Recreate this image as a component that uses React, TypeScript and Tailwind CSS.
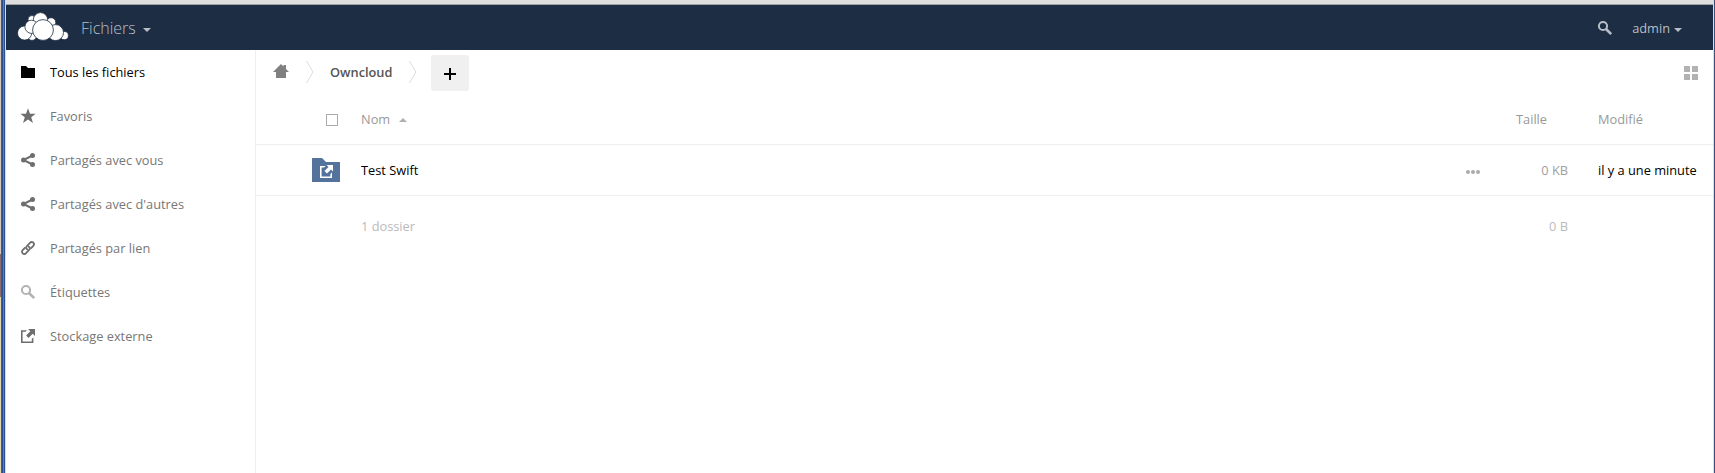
import React from 'react';

type IconProps = { className?: string };

const Logo = () => (
  <svg className="h-[30px] w-[52px]" viewBox="17 12 52 30" fill="#fff" stroke="#1d2d44" strokeWidth="0.8">
    <circle cx="32" cy="19.5" r="4" />
    <circle cx="51" cy="22.5" r="4.8" />
    <circle cx="40.5" cy="19.8" r="7.2" />
    <circle cx="32" cy="35.6" r="4.8" />
    <circle cx="24.6" cy="33" r="7.1" />
    <circle cx="31.5" cy="26.8" r="6.6" />
    <circle cx="64.3" cy="35.6" r="4.1" />
    <circle cx="55.5" cy="32.6" r="8" />
    <circle cx="43" cy="30" r="10.4" />
  </svg>
);

const Folder = ({ className }: IconProps) => (
  <svg className={className} viewBox="0 0 16 16" fill="#000">
    <path d="M1 2h5l2 2h7v10H1z" />
  </svg>
);

const Star = ({ className }: IconProps) => (
  <svg className={className} viewBox="0 0 16 16" fill="#6e6e6e">
    <path d="M8 .2 10 5.700h5.700l-4.500 3.500 1.800 5.800L8 11.600 3 15l1.800-5.800L.3 5.700H6z" />
  </svg>
);

const Share = ({ className }: IconProps) => (
  <svg className={className} viewBox="0 0 16 16" fill="#6e6e6e">
    <path d="M12.5 3.5 3.5 8l9 4.5" fill="none" stroke="#6e6e6e" strokeWidth="2" />
    <circle cx="12.5" cy="3.5" r="2.5" />
    <circle cx="3.5" cy="8" r="2.5" />
    <circle cx="12.5" cy="12.5" r="2.5" />
  </svg>
);

const LinkIcon = ({ className }: IconProps) => (
  <svg className={className} viewBox="0 0 16 16" fill="none" stroke="#6e6e6e" strokeWidth="1.8" strokeLinecap="round">
    <path d="M7.300 9.400C6 8.600 5.900 7.100 6.900 6l3-3.100c1-1 2.400-1.100 3.400-.2.9 1 .8 2.400-.2 3.400l-2 2.100" />
    <path d="M8.700 6.600c1.300.8 1.400 2.300.4 3.400l-3 3.100c-1 1-2.400 1.100-3.400.2-.9-1-.8-2.400.2-3.400l2-2.100" />
  </svg>
);

const Search = ({ className }: IconProps) => (
  <svg className={className} viewBox="0 0 16 16" fill="none" stroke="currentColor">
    <circle cx="6" cy="6" r="4.100" strokeWidth="2" />
    <path d="m9 9 5.200 5.200" strokeWidth="2.600" />
  </svg>
);

const External = ({ className }: IconProps) => (
  <svg className={className} viewBox="0 0 16 16" fill="currentColor">
    <path d="M7 2.200H1V15h12.400V9.500l-1.600 1.300v2.600H2.600V3.800h3z" />
    <path d="M8 1h7v7l-2.300-2.300-4.200 4.200-2.400-2.400 4.200-4.200z" />
  </svg>
);

const Home = () => (
  <svg className="h-4 w-4" viewBox="0 0 16 16" fill="#808080">
    <path d="m8 1-8 8h3v6h10V9h3l-3-3V2h-2.500v1.500z" />
  </svg>
);

const Chevron = () => (
  <svg className="h-[22px] w-2" viewBox="0 0 8 22" fill="none" stroke="#dcdcdc">
    <path d="M.5 0 7 11 .5 22" />
  </svg>
);

const Caret = ({ className }: IconProps) => (
  <svg className={className} viewBox="0 0 8 4" fill="currentColor">
    <path d="M0 0h8L4 4z" />
  </svg>
);

const StorageFolder = () => (
  <svg className="h-6 w-7" viewBox="0 0 28 24">
    <path d="M.5 0H10l4 4h13.500a.5.5 0 0 1 .5.500v19a.5.5 0 0 1-.5.500H.5a.5.5 0 0 1-.5-.5V.5A.5.5 0 0 1 .5 0z" fill="#54739c" />
    <g fill="#fff">
      <path d="M13.500 8H8v12h12v-5.500l-1.600 1.500v2.400H9.600V9.600H12z" />
      <path d="M14.500 7H21v6.500l-2-2-4 4-2.500-2.500 4-4z" />
    </g>
  </svg>
);

const navItems = [
  { label: 'Tous les fichiers', Icon: Folder, tone: 'text-black' },
  { label: 'Favoris', Icon: Star, tone: 'text-[#777]' },
  { label: 'Partagés avec vous', Icon: Share, tone: 'text-[#777]' },
  { label: "Partagés avec d'autres", Icon: Share, tone: 'text-[#777]' },
  { label: 'Partagés par lien', Icon: LinkIcon, tone: 'text-[#777]' },
  { label: 'Étiquettes', Icon: Search, tone: 'text-[#777]', iconTone: 'text-[#b2b2b2]' },
  { label: 'Stockage externe', Icon: External, tone: 'text-[#777]', iconTone: 'text-[#6e6e6e]' },
];

function Header() {
  return (
    <header className="flex h-[45px] shrink-0 items-center bg-[#1d2d44] pl-[11px] pr-[31px] text-[#b8bec6]">
      <div className="-mt-px flex items-center">
        <Logo />
      </div>
      <div className="ml-3 flex items-center">
        <span className="text-[16px] font-light leading-5">Fichiers</span>
        <Caret className="ml-[7px] mt-1 h-1 w-2" />
      </div>
      <Search className="ml-auto mt-px h-4 w-4" />
      <div className="ml-[19px] flex items-center">
        <span className="leading-5">admin</span>
        <Caret className="ml-1 mt-1 h-1 w-2" />
      </div>
    </header>
  );
}

function Sidebar() {
  return (
    <nav className="w-[250px] shrink-0 border-r border-[#eee]">
      {navItems.map(({ label, Icon, tone, iconTone }) => (
        <a key={label} className={`flex h-11 items-center pl-3.5 ${tone}`}>
          <span className={iconTone}>
            <Icon className="h-4 w-4" />
          </span>
          <span className="ml-3.5 whitespace-nowrap">{label}</span>
        </a>
      ))}
    </nav>
  );
}

function Files() {
  return (
    <main className="flex min-w-0 flex-1 flex-col">
      <div className="flex h-11 items-center pl-[17px] pr-[15px]">
        <div className="-mt-0.5">
          <Home />
        </div>
        <div className="ml-[17px]">
          <Chevron />
        </div>
        <span className="ml-4 w-[63px] font-semibold text-[#555]">Owncloud</span>
        <div className="ml-4">
          <Chevron />
        </div>
        <button className="ml-3.5 mt-0.5 flex h-9 w-[38px] items-center justify-center rounded-[3px] bg-[#f0f0f0] pt-0.5">
          <svg className="h-3 w-3" viewBox="0 0 12 12" fill="#000">
            <path d="M5 0h2v5h5v2H7v5H5V7H0V5h5z" />
          </svg>
        </button>
        <svg className="ml-auto mt-0.5 h-3.5 w-3.5" viewBox="0 0 14 14" fill="#b2b2b2">
          <path d="M0 0h6v6H0zM8 0h6v6H8zM0 8h6v6H0zM8 8h6v6H8z" />
        </svg>
      </div>
      <div className="flex h-[51px] items-center border-b border-[#eee] pl-[70px] text-[#999]">
        <span className="mt-px h-3 w-3 border border-[#aaa]" />
        <span className="ml-[23px]">Nom</span>
        <Caret className="ml-[9px] mt-px h-1 w-2 rotate-180 text-[#b0b0b0]" />
        <span className="ml-auto w-[82px]">Taille</span>
        <span className="w-[115px]">Modifié</span>
      </div>
      <div className="flex h-[51px] items-center border-b border-[#eee] pl-14">
        <StorageFolder />
        <span className="ml-[21px] text-black">Test Swift</span>
        <svg className="ml-auto mt-[3px] h-1 w-3.5" viewBox="0 0 14 4" fill="#aaa">
          <circle cx="2" cy="2" r="2" />
          <circle cx="7" cy="2" r="2" />
          <circle cx="12" cy="2" r="2" />
        </svg>
        <span className="w-[88px] text-right text-[#a0a0a0]">0 KB</span>
        <span className="ml-[30px] w-[115px] whitespace-nowrap text-black">il y a une minute</span>
      </div>
      <div className="flex h-[60px] items-center pl-[105px] pr-[145px] text-[#bababa]">
        <span>1 dossier</span>
        <span className="ml-auto">0 B</span>
      </div>
    </main>
  );
}

export default function App() {
  return (
    <div className="flex h-[473px] w-[1715px] overflow-hidden bg-white font-['Open_Sans',sans-serif] text-[12.8px] leading-5">
      <div className="flex w-px shrink-0 flex-col bg-[#d5c9b5]">
        <div className="mt-[254px] h-[43px] bg-[#8a6a68]" />
        <div className="flex-1 bg-[#e0d6ae]" />
      </div>
      <div className="w-px shrink-0 bg-[#555a60]" />
      <div className="w-[3px] shrink-0 border-x border-[#2a4f94] bg-[#4f7dd2]" />
      <div className="w-px shrink-0 bg-[#dcdcdc]" />
      <div className="flex min-w-0 flex-1 flex-col">
        <div className="h-[5px] shrink-0 border-b border-[#a0a0a0] bg-[#dedede]" />
        <Header />
        <div className="flex flex-1">
          <Sidebar />
          <Files />
        </div>
      </div>
      <div className="w-px shrink-0 bg-[#dcdcdc]" />
      <div className="w-px shrink-0 bg-[#36527f]" />
    </div>
  );
}
